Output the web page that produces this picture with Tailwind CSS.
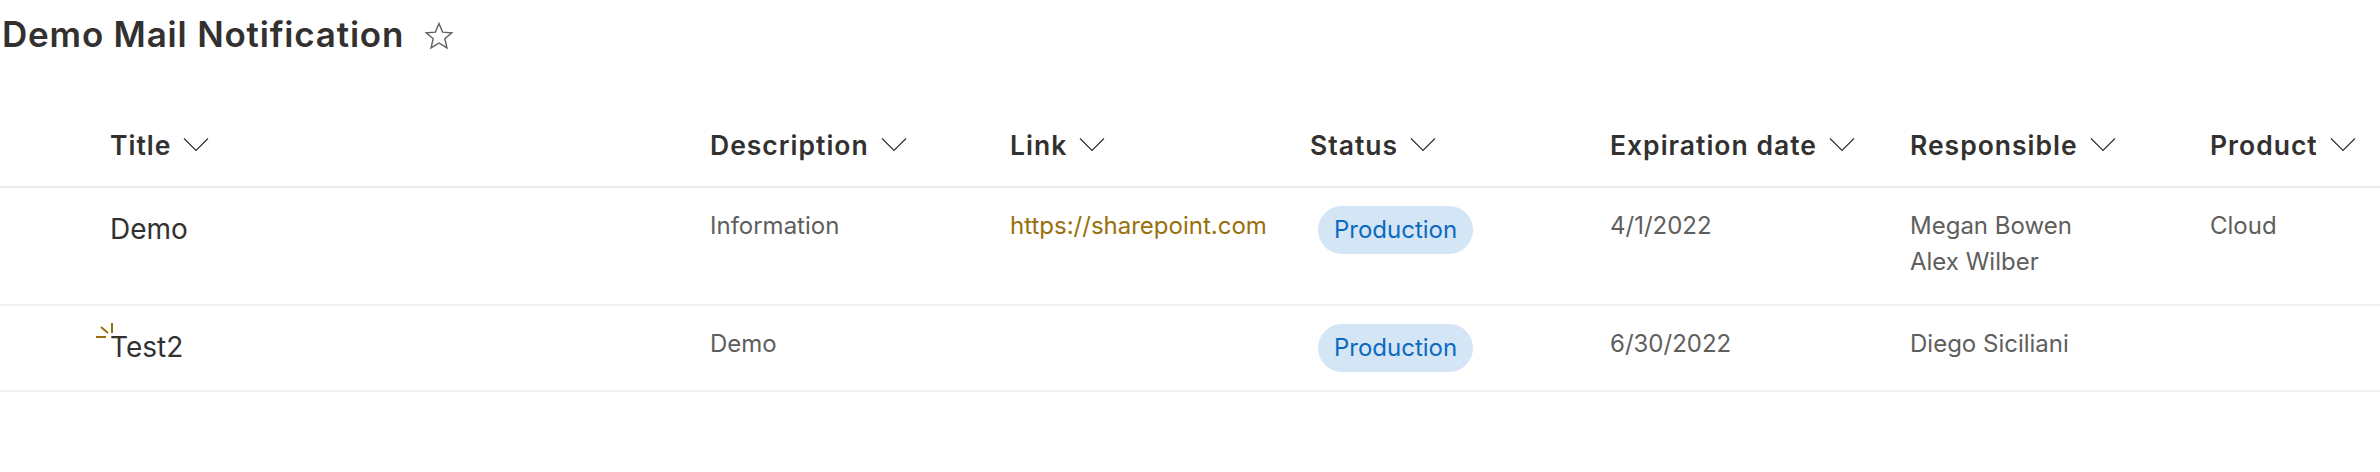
<!DOCTYPE html>
<html lang="en">

<head>
    <meta charset="UTF-8">
    <title>Demo Mail Notification</title>
    <script src="https://cdn.jsdelivr.net/npm/@tailwindcss/browser@4"></script>
</head>

<body class="bg-white w-[2380px] h-[472px] overflow-hidden font-['Inter',sans-serif] text-[#323130]">
    <!-- list title -->
    <div class="flex items-center h-[68px] pl-[2px]">
        <h1 class="text-[35px] font-semibold leading-none tracking-[0.8px]">Demo Mail Notification</h1>
        <svg class="ml-[20px] mt-[3px]" width="30" height="30" viewBox="0 0 30 30" fill="none" stroke="#605e5c" stroke-width="1.4">
            <path d="M15 2.5l3.6 8.6 9.2.7-7 6 2.2 9.1-8-4.9-8 4.9 2.2-9.1-7-6 9.2-.7z" />
        </svg>
    </div>

    <!-- column headers -->
    <div class="grid grid-cols-[110px_600px_300px_300px_300px_300px_300px_170px] items-center h-[120px] border-b-2 border-[#edebe9] text-[26.5px] font-semibold tracking-[1px] pt-[37px]">
        <div></div>
        <div class="flex items-center gap-[12px]">Title
            <svg class="mb-[3px]" width="26" height="15" viewBox="0 0 26 15" fill="none" stroke="#323130" stroke-width="1.2"><path d="M1 1.5l12 12 12-12" /></svg>
        </div>
        <div class="flex items-center gap-[12px]">Description
            <svg class="mb-[3px]" width="26" height="15" viewBox="0 0 26 15" fill="none" stroke="#323130" stroke-width="1.2"><path d="M1 1.5l12 12 12-12" /></svg>
        </div>
        <div class="flex items-center gap-[12px]">Link
            <svg class="mb-[3px]" width="26" height="15" viewBox="0 0 26 15" fill="none" stroke="#323130" stroke-width="1.2"><path d="M1 1.5l12 12 12-12" /></svg>
        </div>
        <div class="flex items-center gap-[12px]">Status
            <svg class="mb-[3px]" width="26" height="15" viewBox="0 0 26 15" fill="none" stroke="#323130" stroke-width="1.2"><path d="M1 1.5l12 12 12-12" /></svg>
        </div>
        <div class="flex items-center gap-[12px]">Expiration date
            <svg class="mb-[3px]" width="26" height="15" viewBox="0 0 26 15" fill="none" stroke="#323130" stroke-width="1.2"><path d="M1 1.5l12 12 12-12" /></svg>
        </div>
        <div class="flex items-center gap-[12px]">Responsible
            <svg class="mb-[3px]" width="26" height="15" viewBox="0 0 26 15" fill="none" stroke="#323130" stroke-width="1.2"><path d="M1 1.5l12 12 12-12" /></svg>
        </div>
        <div class="flex items-center gap-[12px]">Product
            <svg class="mb-[3px]" width="26" height="15" viewBox="0 0 26 15" fill="none" stroke="#323130" stroke-width="1.2"><path d="M1 1.5l12 12 12-12" /></svg>
        </div>
    </div>

    <!-- row 1 -->
    <div class="grid grid-cols-[110px_600px_300px_300px_300px_300px_300px_170px] h-[118px] border-b-2 border-[#f3f2f1] text-[24px] leading-[36px] text-[#605e5c] pt-[20px]">
        <div></div>
        <div class="text-[28px] text-[#323130] leading-[36px] mt-[3px]">Demo</div>
        <div>Information</div>
        <div class="text-[#986f0b]">https://sharepoint.com</div>
        <div class="pl-[8px]">
            <span class="inline-flex items-center h-[48px] px-[16px] mt-[-2px] rounded-[24px] bg-[#d4e5f6] text-[#0b6abf]">Production</span>
        </div>
        <div>4/1/2022</div>
        <div>Megan Bowen<br>Alex Wilber</div>
        <div>Cloud</div>
    </div>

    <!-- row 2 -->
    <div class="grid grid-cols-[110px_600px_300px_300px_300px_300px_300px_170px] h-[86px] border-b-2 border-[#f3f2f1] text-[24px] leading-[36px] text-[#605e5c] pt-[20px]">
        <div class="relative">
            <!-- new item marker -->
            <svg class="absolute left-[96px] top-[-3px]" width="18" height="16" viewBox="0 0 18 16" fill="none" stroke="#986f0b" stroke-width="2">
                <path d="M0 14h10M5 4l7 6M16 0v10" />
            </svg>
        </div>
        <div class="text-[28px] text-[#323130] leading-[36px] mt-[3px]">Test2</div>
        <div>Demo</div>
        <div></div>
        <div class="pl-[8px]">
            <span class="inline-flex items-center h-[48px] px-[16px] mt-[-2px] rounded-[24px] bg-[#d4e5f6] text-[#0b6abf]">Production</span>
        </div>
        <div>6/30/2022</div>
        <div>Diego Siciliani</div>
        <div></div>
    </div>
</body>

</html>
